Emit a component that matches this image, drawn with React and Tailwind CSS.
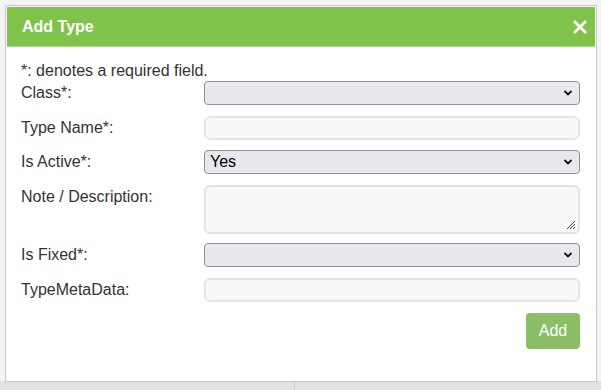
import React from "react";

const font = { fontFamily: '"Liberation Sans", Arial, sans-serif' };

function Chevron() {
	return (
		<svg width="10" height="7" viewBox="0 0 10 7" className="absolute right-[6px] top-1/2 -translate-y-1/2">
			<path d="M1.5 1.5 L5 5 L8.5 1.5" fill="none" stroke="#111" strokeWidth="1.8" />
		</svg>
	);
}

function SelectBox({ value }) {
	return (
		<div className="relative h-[24px] w-full rounded-[4px] border border-[#8f8f9d] bg-[#e9e9ed] pl-[5px] text-[16px] leading-[22px] text-black">
			{value}
			<Chevron />
		</div>
	);
}

function TextBox({ tall }) {
	return (
		<div
			className={
				"relative w-full rounded-[6px] border-2 border-[#e3e3e3] bg-[#f8f8f8] " +
				(tall ? "h-[49px]" : "h-[24px]")
			}
		>
			{tall && (
				<svg width="10" height="10" viewBox="0 0 10 10" className="absolute right-[2px] bottom-[2px]">
					<path d="M9 1 L1 9 M9 4 L4 9 M9 7 L7 9" stroke="#444" strokeWidth="1" />
				</svg>
			)}
		</div>
	);
}

function Row({ label, children, top, className }) {
	return (
		<div className={"flex " + (top ? "items-start " : "items-center ") + (className || "")}>
			<div className={"w-[183px] shrink-0 text-[16px] leading-[18px] text-[#333] " + (top ? "pt-[3px]" : "")}>
				{label}
			</div>
			<div className="flex-1">{children}</div>
		</div>
	);
}

export default function App() {
	return (
		<div className="relative h-[390px] w-[601px] overflow-hidden bg-[#f4f4f4]" style={font}>
			<div className="absolute left-0 right-0 bottom-0 h-[9px] bg-[#e1e1e1]">
				<div className="absolute left-[294px] top-0 h-full w-px bg-[#cfcfcf]" />
			</div>
			<div className="absolute left-[5px] top-[5px] w-[592px] h-[377px] border border-[#c9c9c9] bg-white p-px">
				<div className="flex h-[40px] items-center justify-between border-b border-[#a9d98a] bg-[#7fc34b] pl-[15px] pr-[8px]">
					<span className="text-[16px] font-bold text-white">Add Type</span>
					<svg width="14" height="14" viewBox="0 0 14 14">
						<path d="M2 2 L12 12 M12 2 L2 12" stroke="#fff" strokeWidth="2.8" strokeLinecap="square" />
					</svg>
				</div>
				<div className="pl-[14px] pr-[15px] pt-[15px]">
					<div className="text-[16px] leading-[18px] text-[#333]">*: denotes a required field.</div>
					<Row label="Class*:" className="mt-[1px]">
						<SelectBox value="" />
					</Row>
					<Row label="Type Name*:" className="mt-[11px]">
						<TextBox />
					</Row>
					<Row label="Is Active*:" className="mt-[10px]">
						<SelectBox value="Yes" />
					</Row>
					<Row label="Note / Description:" top className="mt-[11px]">
						<TextBox tall />
					</Row>
					<Row label="Is Fixed*:" className="mt-[9px]">
						<SelectBox value="" />
					</Row>
					<Row label="TypeMetaData:" className="mt-[11px]">
						<TextBox />
					</Row>
					<div className="mt-[11px] flex justify-end">
						<button className="h-[36px] w-[54px] rounded-[4px] bg-[#8cbd67] text-[16px] text-white">Add</button>
					</div>
				</div>
			</div>
		</div>
	);
}
